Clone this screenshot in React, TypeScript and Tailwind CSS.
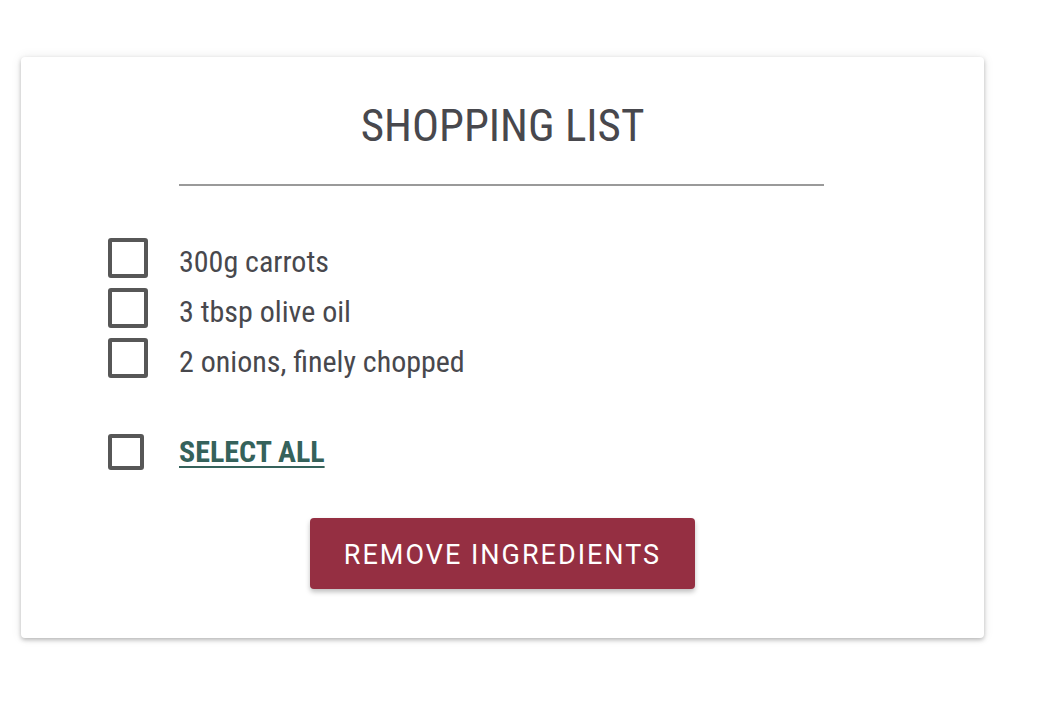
import React from 'react';

const items = ['300g carrots', '3 tbsp olive oil', '2 onions, finely chopped'];

function Box({ size = 'w-[40px] h-[40px]' }: { size?: string }) {
  return <span className={`block ${size} shrink-0 rounded-[3px] border-[4px] border-[#575757] bg-white`} />;
}

export default function App() {
  return (
    <div className="min-h-screen bg-white pt-[57px] pl-[21px]" style={{ fontFamily: 'Roboto, "Liberation Sans", sans-serif' }}>
      <div className="w-[963px] h-[581px] rounded-[4px] bg-white shadow-[0_2px_4px_rgba(0,0,0,0.25),0_0_12px_rgba(0,0,0,0.08)] flex flex-col">
        {/* Header */}
        <h1 className="mt-[45px] text-center text-[45px] leading-[48px] text-[#48484d] [font-stretch:75%]">
          SHOPPING LIST
        </h1>
        <div className="mt-[34px] ml-[158px] w-[645px] h-[2px] bg-[#9a9a9a]" />

        {/* Items */}
        <ul className="mt-[47px] ml-[87px] flex flex-col">
          {items.map((item) => (
            <li key={item} className="h-[50px] flex items-center gap-[31px]">
              <Box />
              <span className="mt-[8px] text-[30px] leading-[36px] text-[#48484d] [font-stretch:75%]">{item}</span>
            </li>
          ))}
        </ul>

        <div className="mt-[44px] ml-[87px] h-[50px] flex items-center gap-[35px]">
          <Box size="w-[36px] h-[36px]" />
          <span className="text-[30px] leading-[36px] font-bold text-[#35625b] underline underline-offset-[4px] decoration-[2px] [font-stretch:75%]">
            SELECT ALL
          </span>
        </div>

        <div className="mt-[41px] flex justify-center">
          <button className="w-[385px] h-[71px] pt-[4px] rounded-[4px] bg-[#952f42] text-white text-[27px] tracking-[2px] shadow-[0_3px_5px_rgba(0,0,0,0.25)]">
            REMOVE INGREDIENTS
          </button>
        </div>
      </div>
    </div>
  );
}
